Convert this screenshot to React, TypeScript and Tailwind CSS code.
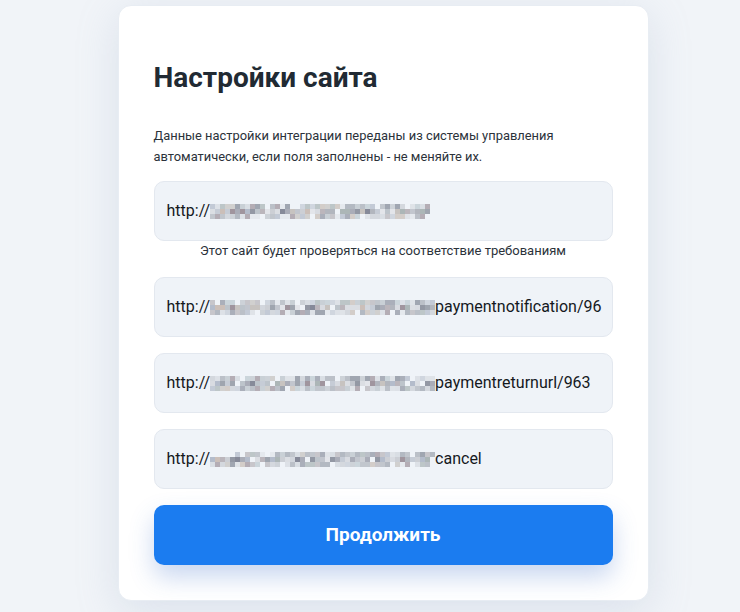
import React from "react";

function rand(seed: number) {
  let s = seed;
  return () => {
    s = (s * 9301 + 49297) % 233280;
    return s / 233280;
  };
}

const palette = [
  "#c9ccd3", "#bfc3cb", "#d6d9df", "#aeb2bb", "#9aa0ab", "#b7b2b8", "#c4c0bd",
  "#8d929f", "#a5a9b4", "#d0d4db", "#b9c1c8", "#9b8f99", "#c8bcb5", "#bcc7cf",
  "#e1e4e9", "#a8b2b3", "#7f8493", "#c3c9d4", "#b0b8c8", "#d9dce1",
];

function Pixelated({ seed, width }: { seed: number; width: number }) {
  const r = rand(seed);
  const cols = Math.floor(width / 5);
  const cells: React.ReactElement[] = [];
  for (let row = 0; row < 3; row++) {
    for (let c = 0; c < cols; c++) {
      const v = r();
      const skip = v < 0.08;
      if (skip) continue;
      const color = palette[Math.floor(r() * palette.length)];
      cells.push(
        <rect key={`${row}-${c}`} x={c * 5} y={row * 5} width={5} height={5} fill={color} opacity={row === 1 ? 0.95 : 0.7} />
      );
    }
  }
  return (
    <svg width={width} height={15} viewBox={`0 0 ${width} 15`} className="shrink-0" shapeRendering="crispEdges">
      {cells}
    </svg>
  );
}

function Field({ seed, width, suffix }: { seed: number; width: number; suffix?: string }) {
  return (
    <div className="flex h-[60px] items-center rounded-[10px] border border-[#e3e8ef] bg-[#eff3f8] px-[12px] text-[16px] text-[#15191e]">
      <span>http://</span>
      <Pixelated seed={seed} width={width} />
      {suffix && <span>{suffix}</span>}
    </div>
  );
}

export default function App() {
  return (
    <div
      className="flex min-h-[612px] w-full justify-center bg-[#f1f4f8] pl-[26px] pt-[5px]"
      style={{ fontFamily: "Roboto, 'Liberation Sans', sans-serif" }}
    >
      <div className="h-[596px] w-[531px] rounded-[13px] border border-[#e8edf3] bg-white px-[35px] pt-[55px] shadow-[0_10px_40px_rgba(150,170,200,0.25)]">
        <h1 className="text-[28px] font-bold leading-[34px] text-[#212a33]">Настройки сайта</h1>
        <p className="mt-[30px] text-[12.9px] leading-[21px] text-[#2b323a]">
          Данные настройки интеграции переданы из системы управления
          <br />
          автоматически, если поля заполнены - не меняйте их.
        </p>
        <div className="mt-[14px]">
          <Field seed={11} width={220} />
        </div>
        <p className="text-center text-[13px] leading-[20px] text-[#2b323a]">
          Этот сайт будет проверяться на соответствие требованиям
        </p>
        <div className="mt-[16px] flex flex-col gap-[16px]">
          <Field seed={27} width={225} suffix="paymentnotification/96" />
          <Field seed={53} width={225} suffix="paymentreturnurl/963" />
          <Field seed={71} width={225} suffix="cancel" />
        </div>
        <button className="mt-[16px] flex h-[60px] w-full items-center justify-center rounded-[10px] bg-[#1b7cf0] text-[19px] font-bold text-white shadow-[0_12px_24px_rgba(60,110,200,0.28)]">
          Продолжить
        </button>
      </div>
    </div>
  );
}
